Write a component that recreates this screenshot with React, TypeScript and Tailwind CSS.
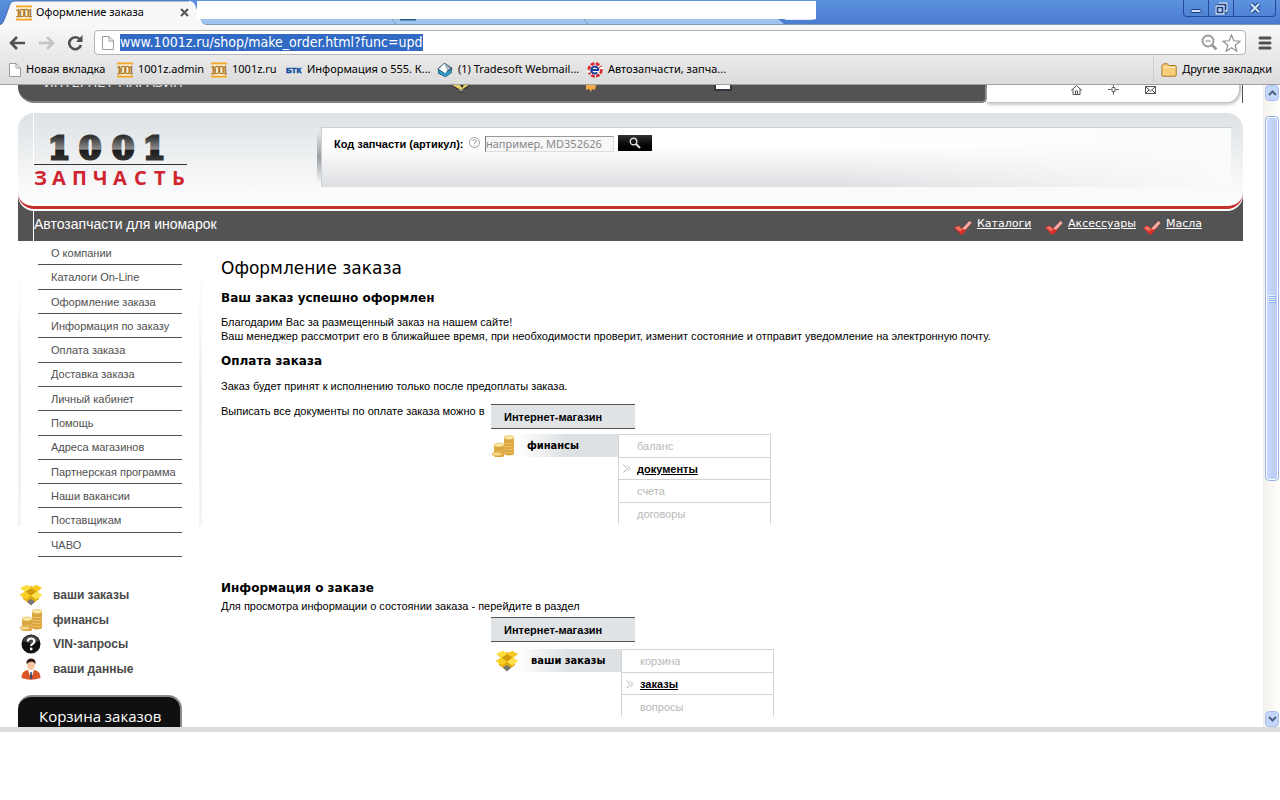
import type { ReactNode } from "react";

const menuItems = [
  "О компании",
  "Каталоги On-Line",
  "Оформление заказа",
  "Информация по заказу",
  "Оплата заказа",
  "Доставка заказа",
  "Личный кабинет",
  "Помощь",
  "Адреса магазинов",
  "Партнерская программа",
  "Наши вакансии",
  "Поставщикам",
  "ЧАВО",
];

const PageIcon = () => (
  <svg width="12" height="14" viewBox="0 0 12 14" className="shrink-0">
    <path d="M.5.5h6.500l4.500 4.500v8.500H.5z" fill="#fff" stroke="#9a9a9a" />
    <path d="M7 .5V5h4.500" fill="none" stroke="#9a9a9a" />
  </svg>
);

const ShopFavicon = () => (
  <svg width="16" height="16" viewBox="0 0 16 16" className="shrink-0">
    <path d="M0 .5h16v2H0zM0 13.500h16v2H0z" fill="#f5a623" />
    <path d="M2 2.500h12v11H2z" fill="#fdf0cf" />
    <text x="-1 3 7 11" y="12" fontSize="13" fontFamily="Liberation Serif, serif" fill="#a8701a" stroke="#a8701a" strokeWidth=".3">
      1001
    </text>
  </svg>
);

const BtkIcon = () => (
  <svg width="16" height="16" viewBox="0 0 16 16" className="shrink-0">
    <text x="0" y="11" fontSize="8" fontFamily="Liberation Sans, sans-serif" fontWeight="bold" fill="#0b4f9e" stroke="#0b4f9e" strokeWidth=".5">
      БТК
    </text>
  </svg>
);

const MailIcon = () => (
  <svg width="16" height="16" viewBox="0 0 16 16" className="shrink-0">
    <path d="M7.500.8 15.300 6 14.500 11 8.500 15.300 1 11.500.8 6.500z" fill="#25465c" />
    <path d="M1.500 7 7.500 1.500l3 6.500-2 3.500z" fill="#fff" />
    <path d="M7.500 1.500 14 6.300 10 9z" fill="#a9bac6" />
    <path d="M1 8l7.500 3.500L11 9l4-1.500-.8 3.200-5.700 4L1.500 11z" fill="#2f9ac8" />
  </svg>
);

const GearIcon = () => (
  <svg width="16" height="16" viewBox="0 0 16 16" className="shrink-0">
    <circle cx="8" cy="8" r="6.300" fill="#fff" stroke="#d8262c" strokeWidth="2.800" strokeDasharray="3.600 1.350" />
    <path d="M0 8.800h3v2H0zM13 5h3v2h-3z" fill="#fff" />
    <path d="M4 8h8M11.300 8a3.500 3.500 0 1 0-1.100 2.600" fill="none" stroke="#1a3f94" strokeWidth="2" />
  </svg>
);

const FolderIcon = () => (
  <svg width="16" height="14" viewBox="0 0 16 14" className="shrink-0">
    <path d="M1 2.500 2.500.8h4L8 2.500h6q1.200 0 1.200 1.200v8.300q0 1.200-1.200 1.200H2Q.8 13.200.8 12z" fill="#f9cf7c" stroke="#a8782a" />
    <path d="M1.500 4.500h13" stroke="#fdeab8" />
  </svg>
);

const BoxIcon = () => (
  <svg width="24" height="22" viewBox="0 0 24 22" className="shrink-0">
    <path d="M4 10v5l8 6 8-6v-5z" fill="#e3ad12" />
    <path d="M8 17.500l4-2.500 4 2.500-4 4z" fill="#757575" />
    <path d="M4 6 12 2l8 4-8 6z" fill="#d39a0a" />
    <path d="M1 4 8 .8l5 3L6 8z" fill="#fbdc3c" />
    <path d="M12 3.800 17 .8 23 4l-5 4z" fill="#f5c91f" />
    <path d="M.5 11 6 7.500l6 4-5 4z" fill="#f8cf22" />
    <path d="M23.500 11 18 7.500l-6 4 5 4z" fill="#fde14b" />
  </svg>
);

const Coin = ({ x, y }: { x: number; y: number }) => (
  <g>
    <path d={`M${x} ${y}v2.500a5 2 0 0 0 10 0v-2.500z`} fill="#dba540" />
    <ellipse cx={x + 5} cy={y} rx="5" ry="2" fill="#fce9a6" stroke="#e0b04a" strokeWidth=".6" />
  </g>
);

const CoinsIcon = () => (
  <svg width="24" height="22" viewBox="0 0 24 22" className="shrink-0">
    {[16, 13, 10, 7, 4, 2.5].map((y) => (
      <Coin key={y} x={13} y={y} />
    ))}
    {[18, 15, 12, 10].map((y) => (
      <Coin key={y} x={3} y={y} />
    ))}
    <ellipse cx="6" cy="19" rx="5" ry="2" fill="#f9da84" stroke="#d29a38" strokeWidth=".6" />
  </svg>
);

const QuestionIcon = () => (
  <svg width="24" height="22" viewBox="0 0 24 22" className="shrink-0">
    <circle cx="12" cy="11" r="9.500" fill="#111" />
    <path d="M4 8a8.500 8.500 0 0 1 16 0q-8 4-16 0" fill="#444" />
    <path d="M8.800 8.500q.2-3 3.300-3t3.300 2.700q0 1.600-1.700 2.600T12.200 13" fill="none" stroke="#fff" strokeWidth="2.200" />
    <circle cx="12.200" cy="16" r="1.400" fill="#fff" />
  </svg>
);

const UserIcon = () => (
  <svg width="24" height="22" viewBox="0 0 24 22" className="shrink-0">
    <path d="M2.500 20q0-7 6-8h7q6 1 6 8-9.500 3.500-19 0z" fill="#dc5526" />
    <path d="M9 12l3 9 3-9z" fill="#fff" />
    <path d="M11.400 14h1.300l.6 6-1.300 1.500-1.200-1.500z" fill="#3a4a6a" />
    <ellipse cx="12" cy="6.800" rx="4" ry="5.200" fill="#f4c7a0" />
    <path d="M7.500 6Q7 .5 12.500.5 17 .8 16.500 6q-1.500-2.500-4-2.500T7.500 6z" fill="#2a1a12" />
  </svg>
);

const CheckIcon = () => (
  <svg width="18" height="16" viewBox="0 0 18 16" className="shrink-0">
    <path d="M0 7.500l5-2 3 3 7.500-7.500L17.500 3 9 14q-2 1.500-3.500-.5z" fill="#dc2f28" />
    <path d="M8 9l7.500-8L17.500 3l-6 6.500z" fill="#f5b0a8" />
    <path d="M1 7.800l4-1.600 3 4-2 1z" fill="#f0746a" />
  </svg>
);

const Bookmark = ({ icon, children, className }: { icon: ReactNode; children: ReactNode; className: string }) => (
  <a href="#" className={`flex items-center gap-[5px] whitespace-nowrap ${className}`}>
    {icon}
    {children}
  </a>
);

const Chrome = () => (
  <header className="shrink-0 font-[Noto_Sans,sans-serif] text-[11px] text-black">
    {/* Tab strip */}
    <div className="relative flex h-[25px] items-start border-b border-[#8096b4] bg-gradient-to-b from-[#5c92de] to-[#4a7bd0]">
      <svg width="210" height="25" viewBox="0 0 210 25" className="absolute left-0 top-0">
        <path d="M0 25Q3 24 5 18L10 4Q11 1 15 1H189Q193 1 195 5L202 22Q203 25 207 25z" fill="#f8f8f8" />
        <path d="M0 25Q3 24 5 18L10 4Q11 1 15 1H189" fill="none" stroke="#3a62a8" strokeWidth=".8" />
      </svg>
      <div className="relative flex h-[25px] w-[197px] items-center gap-1 pl-4">
        <ShopFavicon />
        <button className="flex-1 text-left">Оформление заказа</button>
        <button aria-label="Закрыть вкладку" className="mr-2">
          <svg width="9" height="9" viewBox="0 0 9 9">
            <path d="M1 1l7 7M8 1 1 8" stroke="#555" strokeWidth="2" />
          </svg>
        </button>
      </div>
      <div className="relative mt-px h-[18px] w-[619px] bg-white" />
      <svg width="620" height="6" viewBox="0 0 620 6" className="absolute left-[200px] top-[19px]">
        <path d="M0 0H578l6 5H4z" fill="#9fc4ee" />
        <path d="M584 0h32l-4 1h-26z" fill="#dbe9fa" />
        <path d="M200 0h16" stroke="#245a80" strokeWidth="3" />
        <path d="M192 0l4 5M384 0l4 5" stroke="#7898c0" />
      </svg>
      <div className="ml-auto mr-1 flex h-[17px] rounded-b border border-t-0 border-[#27499a] text-[#dfe9fb]">
        <button aria-label="Свернуть" className="flex w-[25px] items-center justify-center border-r border-[#27499a]">
          <svg width="12" height="12" viewBox="0 0 12 12">
            <rect x="1" y="7.500" width="10" height="3" rx="1" fill="#cfe0fa" stroke="#1c3c80" />
          </svg>
        </button>
        <button aria-label="Восстановить" className="flex w-[25px] items-center justify-center border-r border-[#27499a]">
          <svg width="13" height="13" viewBox="0 0 13 13">
            <path d="M4 1h8v8h-2M1 4h8v8H1zM4 7h2v2H4z" fill="none" stroke="#1c3c80" strokeWidth="3" />
            <path d="M4 1h8v8h-2M1 4h8v8H1zM4 7h2v2H4z" fill="none" stroke="#d5e4fb" strokeWidth="1.300" />
          </svg>
        </button>
        <button aria-label="Закрыть" className="flex w-[41px] items-center justify-center">
          <svg width="12" height="12" viewBox="0 0 12 12">
            <path d="M2 2l8 8M10 2l-8 8" stroke="#1c3c80" strokeWidth="4" />
            <path d="M2 2l8 8M10 2l-8 8" stroke="#d5e4fb" strokeWidth="2.200" />
          </svg>
        </button>
      </div>
    </div>

    <div className="border-b border-[#a0a0a0] bg-gradient-to-b from-[#f8f8f8] to-[#dcdcdc]">
      {/* Address bar */}
      <div className="flex items-center pl-[9px] pr-2 pt-[5px]">
        <button aria-label="Назад" className="w-[29px]">
          <svg width="17" height="14" viewBox="0 0 17 14">
            <path d="M8 1 2 7l6 6M2 7h14" fill="none" stroke="#505050" strokeWidth="2.600" />
          </svg>
        </button>
        <button aria-label="Вперёд" className="w-[29px]">
          <svg width="17" height="14" viewBox="0 0 17 14">
            <path d="M9 1l6 6-6 6M15 7H1" fill="none" stroke="#c4c4c4" strokeWidth="2.600" />
          </svg>
        </button>
        <button aria-label="Обновить" className="w-[27px]">
          <svg width="17" height="16" viewBox="0 0 17 16">
            <path d="M13 4.500A6 6 0 1 0 14 10" fill="none" stroke="#505050" strokeWidth="2.600" />
            <path d="M15.500 0v7H9z" fill="#505050" />
          </svg>
        </button>
        <div className="flex h-[25px] flex-1 items-center rounded-sm border border-[#b4b4b4] bg-white pl-[7px] pr-1">
          <PageIcon />
          <input
            aria-label="Адрес"
            readOnly
            value="www.1001z.ru/shop/make_order.html?func=upd"
            className="ml-[6px] field-sizing-content h-[17px] bg-[#316ac5] font-[DejaVu_Sans_Condensed,DejaVu_Sans,sans-serif] text-[14px] text-white outline-none"
          />
          <button aria-label="Масштаб" className="ml-auto mr-1">
            <svg width="17" height="17" viewBox="0 0 17 17" fill="none" stroke="#999">
              <circle cx="7" cy="7" r="5.500" strokeWidth="1.800" />
              <path d="M11 11l4.500 4.500" strokeWidth="2.600" />
              <path d="M4.500 7h5" strokeWidth="1.300" />
            </svg>
          </button>
          <button aria-label="В закладки">
            <svg width="19" height="18" viewBox="0 0 19 18">
              <path d="M9.500 1l2.300 5.800 6.200.4-4.800 4 1.600 6-5.300-3.400-5.300 3.400 1.600-6-4.800-4 6.200-.4z" fill="#fff" stroke="#909090" strokeWidth="1.200" />
            </svg>
          </button>
        </div>
        <button aria-label="Меню" className="ml-3">
          <svg width="14" height="14" viewBox="0 0 14 14">
            <path d="M2 2h10M2 7h10M2 12h10" stroke="#505050" strokeWidth="3" strokeLinecap="round" />
          </svg>
        </button>
      </div>

      {/* Bookmarks */}
      <nav className="flex h-[29px] items-center pl-[9px] pr-2">
        <Bookmark icon={<PageIcon />} className="w-[108px]">Новая вкладка</Bookmark>
        <Bookmark icon={<ShopFavicon />} className="w-[94px]">1001z.admin</Bookmark>
        <Bookmark icon={<ShopFavicon />} className="w-[75px]">1001z.ru</Bookmark>
        <Bookmark icon={<BtkIcon />} className="w-[151px]">Информация о 555. К...</Bookmark>
        <Bookmark icon={<MailIcon />} className="w-[150px]">(1) Tradesoft Webmail...</Bookmark>
        <Bookmark icon={<GearIcon />} className="w-[150px]">Автозапчасти, запча...</Bookmark>
        <Bookmark icon={<FolderIcon />} className="ml-auto border-l border-[#c8d0c8] py-1 pl-[7px]">Другие закладки</Bookmark>
      </nav>
    </div>
  </header>
);

const ScrollBar = () => (
  <div className="flex w-[17px] shrink-0 flex-col border-l border-[#eeede5] bg-gradient-to-r from-[#f3f2ec] to-[#fefefb] px-px">
    <button aria-label="Вверх" className="flex h-4 items-center justify-center rounded-sm border border-[#a9c0f0] bg-[#c6d6fb]">
      <svg width="9" height="6" viewBox="0 0 9 6">
        <path d="M1 5l3.500-3.500L8 5" fill="none" stroke="#4d6185" strokeWidth="2" />
      </svg>
    </button>
    <div className="mt-[15px] flex h-[365px] items-center justify-center rounded-sm border border-[#98b1e4] bg-gradient-to-r from-[#cbd9fd] to-[#b8cbf8] shadow-[inset_0_0_0_1px_#fff]">
      <svg width="8" height="8" viewBox="0 0 8 8">
        <path d="M0 .5h7M0 2.500h7M0 4.500h7M0 6.500h7" stroke="#eef4fe" />
        <path d="M1 1.500h7M1 3.500h7M1 5.500h7M1 7.500h7" stroke="#8cb0f8" />
      </svg>
    </div>
    <button aria-label="Вниз" className="mt-auto flex h-4 items-center justify-center rounded-sm border border-[#a9c0f0] bg-[#c6d6fb]">
      <svg width="9" height="6" viewBox="0 0 9 6">
        <path d="M1 1l3.500 3.500L8 1" fill="none" stroke="#4d6185" strokeWidth="2" />
      </svg>
    </button>
  </div>
);

const TopStrip = () => (
  <div className="flex h-[18px]">
    <div className="flex flex-1 items-start overflow-hidden rounded-bl-[16px] rounded-br-[5px] border-b-2 border-r-2 border-[#808080] bg-[#535353]">
      <p className="-mt-[10px] w-[430px] pl-[26px] font-[DejaVu_Sans,sans-serif] text-[13px] leading-4 text-[#e4e4e4]">ИНТЕРНЕТ-МАГАЗИН</p>
      <svg width="262" height="10" viewBox="0 0 262 10" className="shrink-0">
        <path d="M3 0h19l-9 8z" fill="#2e2e2e" />
        <path d="M4 0h8l2 3 2-3h5l-8 5z" fill="#e8d36a" />
        <path d="M8 3.500l5 3.500 5-3.500-5 1.500z" fill="#8a8a8a" />
        <path d="M138 0h10l-1 5-3-1-1 3-2-3-3 1z" fill="#f3a94a" />
      </svg>
      <svg width="26" height="10" viewBox="0 0 26 10" className="shrink-0">
        <rect x="4" width="18" height="6" fill="#33363e" />
        <rect x="6" width="14" height="4" fill="#fff" />
      </svg>
    </div>
    <div className="flex w-[254px] items-start justify-center gap-[26px] rounded-br-[14px] border-b border-r-2 border-[#c4c4c4] bg-white shadow-[0_2px_3px_#ccc]">
      <svg width="11" height="10" viewBox="0 0 11 10" fill="none" stroke="#555">
        <path d="M0 5.500 5.500.7 11 5.500M2 4v5.500h7V4M4.500 9V6h2v3" />
      </svg>
      <svg width="11" height="10" viewBox="0 0 11 10" fill="none" stroke="#666">
        <path d="M5.500 0v3M5.500 6v3.500M0 4.500h3.500M7 4.500h4M4 2.500h3v4H4z" />
      </svg>
      <svg width="11" height="10" viewBox="0 0 11 10" fill="none" stroke="#555">
        <path d="M.5 1.500h10v7H.5zM.5 1.500 5.500 6l5-4.500M.5 8.500 4 5M10.500 8.500 7 5" />
      </svg>
    </div>
    <div className="w-[2px] border-r border-[#555]" />
  </div>
);

const Logo = () => (
  <a href="#" aria-label="1001 запчасть">
    <svg width="160" height="74" viewBox="0 -10 160 74">
      <defs>
        <linearGradient id="steel" x1="0" y1="0" x2="0" y2="1">
          <stop offset=".2" stopColor="#333" />
          <stop offset=".53" stopColor="#8c8c8c" />
          <stop offset=".56" stopColor="#1c1c1c" />
          <stop offset=".9" stopColor="#3a3a3a" />
        </linearGradient>
      </defs>
      <text x="14 45 78 109" y="25" fontSize="32" fontFamily="DejaVu Serif, serif" fontWeight="bold" fill="url(#steel)" stroke="url(#steel)" strokeWidth="3">
        1001
      </text>
      <path d="M0 30.500h153" stroke="#333" />
      <text x="0 18 38 59 79 100 120 138" y="51" fontSize="20" fontFamily="Open Sans, sans-serif" fontWeight="bold" fill="#cf2430">
        ЗАПЧАСТЬ
      </text>
    </svg>
  </a>
);

const SiteHeader = () => (
  <div className="mt-[10px] rounded-t-[16px] bg-[linear-gradient(to_bottom,transparent_80px,#535353_80px)]">
    <div className="rounded-[16px] bg-white pb-[2px]">
      <div className="flex h-[96px] rounded-[16px] border-b-[3px] border-[#c4302b] bg-gradient-to-b from-[#dee2e5] to-white">
        <div className="w-4 border-r border-white" />
        <div className="w-[283px] pt-[11px]">
          <Logo />
        </div>
        <div className="mt-[18px] h-[52px] w-1 rounded-l-full bg-[linear-gradient(to_bottom,transparent,#9a9da0,transparent)]" />
        <form
          onSubmit={(e) => e.preventDefault()}
          className="mr-3 mt-[14px] flex h-[60px] flex-1 items-start border-l border-t border-[#cdd1d4] bg-[linear-gradient(to_right,transparent_55%,#fafbfb),linear-gradient(to_bottom,#fff_30%,#dcdee1)] pl-3 pt-[7px]"
        >
          <label htmlFor="part" className="w-[134px] whitespace-nowrap pt-px text-[11px] font-bold leading-4">
            Код запчасти (артикул):
          </label>
          <svg width="13" height="13" viewBox="0 0 13 13" className="mr-1 mt-px" fill="none" stroke="#999">
            <circle cx="6.500" cy="6.500" r="5" />
            <path d="M4.800 5q.2-1.500 1.700-1.500T8.200 5q0 1-1.700 2v1M6.500 9v1" />
          </svg>
          <input
            id="part"
            placeholder="например, MD352626"
            className="mt-px h-4 w-[129px] border border-[#ddd] border-l-[#777] border-t-[#999] bg-[#f7f7f7] font-[Noto_Sans,sans-serif] text-[11px] placeholder:text-[#888]"
          />
          <button aria-label="Найти" className="ml-1 flex h-4 w-[34px] items-center justify-center bg-gradient-to-b from-[#333] to-black">
            <svg width="12" height="12" viewBox="0 0 12 12" fill="none" stroke="#ddd">
              <circle cx="4.500" cy="4.500" r="3.300" strokeWidth="1.400" />
              <path d="M7 7l4 4" strokeWidth="2" />
            </svg>
          </button>
        </form>
      </div>
    </div>
    <div className="flex h-[30px] items-center bg-[#535353] text-white">
      <div className="h-full w-4 border-r border-white" />
      <p className="mb-1 text-[14px]">Автозапчасти для иномарок</p>
      <nav className="ml-auto flex pr-10 font-[DejaVu_Sans,sans-serif] text-[11px] leading-4">
        <a href="#" className="flex w-[91px] gap-[5px] underline"><span className="pt-1"><CheckIcon /></span>Каталоги</a>
        <a href="#" className="flex w-[98px] gap-[5px] underline"><span className="pt-1"><CheckIcon /></span>Аксессуары</a>
        <a href="#" className="flex w-[60px] gap-[5px] underline"><span className="pt-1"><CheckIcon /></span>Масла</a>
      </nav>
    </div>
  </div>
);

const SideShade = () => (
  <div className="mt-[25px] h-[260px] w-[3px] bg-gradient-to-b from-transparent via-[#eceeee] to-[#f4f4f4]" />
);

const Sidebar = () => (
  <aside className="w-[184px] shrink-0">
    <div className="flex justify-between">
      <SideShade />
      <nav className="flex h-[316px] w-[144px] flex-col text-[11px] text-[#505050]">
        {menuItems.map((item) => (
          <a key={item} href="#" className="flex flex-1 items-center whitespace-nowrap border-b border-[#505050] pl-[13px] pt-px">
            {item}
          </a>
        ))}
      </nav>
      <SideShade />
    </div>
    <nav className="mt-[26px] flex h-[98px] flex-col text-[12px] font-bold text-[#4a4a4a]">
      <a href="#" className="flex flex-1 items-center gap-[10px] pl-px"><BoxIcon />ваши заказы</a>
      <a href="#" className="flex flex-1 items-center gap-[10px] pl-px"><CoinsIcon />финансы</a>
      <a href="#" className="flex flex-1 items-center gap-[10px] pl-px"><QuestionIcon />VIN-запросы</a>
      <a href="#" className="flex flex-1 items-center gap-[10px] pl-px"><UserIcon />ваши данные</a>
    </nav>
    <h2 className="mt-[14px] h-12 w-[164px] rounded-t-[14px] border-r-2 border-t-2 border-[#8a8a8a] bg-[#101010] pl-[21px] pt-[7px] font-[Open_Sans,sans-serif] text-[15px] leading-6 text-white">
      Корзина заказов
    </h2>
  </aside>
);

interface ShopMenuProps {
  icon: ReactNode;
  title: string;
  items: string[];
  active: string;
  rowClass: string;
  titleClass: string;
  listClass: string;
}

const ShopMenu = ({ icon, title, items, active, rowClass, titleClass, listClass }: ShopMenuProps) => (
  <div className="text-[11px]">
    <h3 className="flex h-[25px] w-[144px] items-center border-y border-[#555] bg-[#dfe3e6] pl-[13px] font-bold">
      Интернет-магазин
    </h3>
    <div className={`flex items-start ${rowClass}`}>
      <div className={`flex h-[23px] items-center gap-3 bg-gradient-to-r from-white from-20% to-[#dde1e4] to-60% ${titleClass}`}>
        {icon}
        <span className="whitespace-nowrap font-[DejaVu_Sans_Condensed,DejaVu_Sans,sans-serif] text-[11px] font-bold">{title}</span>
      </div>
      <ul className={`flex w-[153px] flex-col border-x border-t border-[#d4d4d4] ${listClass}`}>
        {items.map((item) => (
          <li key={item} className="flex flex-1 items-center border-b border-[#d4d4d4] pl-1 pt-px last:border-b-0">
            <span className="w-[14px]">
              {item === active && (
                <svg width="8" height="9" viewBox="0 0 8 9" fill="none" stroke="#999">
                  <path d="M.5.5l3.500 4-3.500 4M4 1.500l3 3-3 3" strokeDasharray="1.500 .7" />
                </svg>
              )}
            </span>
            <a href="#" className={item === active ? "font-bold text-black underline" : "text-[#b8b8b8]"}>
              {item}
            </a>
          </li>
        ))}
      </ul>
    </div>
  </div>
);

const OrderContent = () => (
  <main className="min-w-0 flex-1 pl-[19px] text-[11px] leading-[14px] text-black">
    <h1 className="mt-4 font-[DejaVu_Sans,sans-serif] text-[17px] leading-[22px]">Оформление заказа</h1>
    <h2 className="mt-[11px] font-[DejaVu_Sans,sans-serif] text-[12px] font-bold leading-4">Ваш заказ успешно оформлен</h2>
    <p className="mt-[9px]">
      Благодарим Вас за размещенный заказ на нашем сайте!
      <br />
      Ваш менеджер рассмотрит его в ближайшее время, при необходимости проверит, изменит состояние и отправит уведомление на электронную почту.
    </p>
    <h2 className="mt-[10px] font-[DejaVu_Sans,sans-serif] text-[12px] font-bold leading-4">Оплата заказа</h2>
    <p className="mt-[10px]">Заказ будет принят к исполнению только после предоплаты заказа.</p>
    <div className="mt-[11px] flex items-start">
      <p className="w-[270px] whitespace-nowrap">Выписать все документы по оплате заказа можно в</p>
      <ShopMenu
        icon={<CoinsIcon />}
        title="финансы"
        items={["баланс", "документы", "счета", "договоры"]}
        active="документы"
        rowClass="mt-[5px]"
        titleClass="w-[127px]"
        listClass="h-[90px]"
      />
    </div>
    <h2 className="mt-[56px] font-[DejaVu_Sans,sans-serif] text-[12px] font-bold leading-4">Информация о заказе</h2>
    <p className="mt-[3px]">Для просмотра информации о состоянии заказа - перейдите в раздел</p>
    <div className="mt-1 pl-[270px]">
      <ShopMenu
        icon={<span className="pl-1"><BoxIcon /></span>}
        title="ваши заказы"
        items={["корзина", "заказы", "вопросы"]}
        active="заказы"
        rowClass="mt-[7px]"
        titleClass="w-[130px]"
        listClass="h-[68px]"
      />
    </div>
  </main>
);

export default function App() {
  return (
    <div className="flex h-screen flex-col bg-white pb-[68px] font-[Liberation_Sans,Arial,sans-serif]">
      <Chrome />
      <div className="flex min-h-0 flex-1 overflow-hidden border-b-[5px] border-[#dcdcdc]">
        <div className="min-w-0 flex-1 overflow-hidden pl-[18px] pr-5">
          <TopStrip />
          <SiteHeader />
          <div className="flex">
            <Sidebar />
            <OrderContent />
          </div>
        </div>
        <ScrollBar />
      </div>
    </div>
  );
}
